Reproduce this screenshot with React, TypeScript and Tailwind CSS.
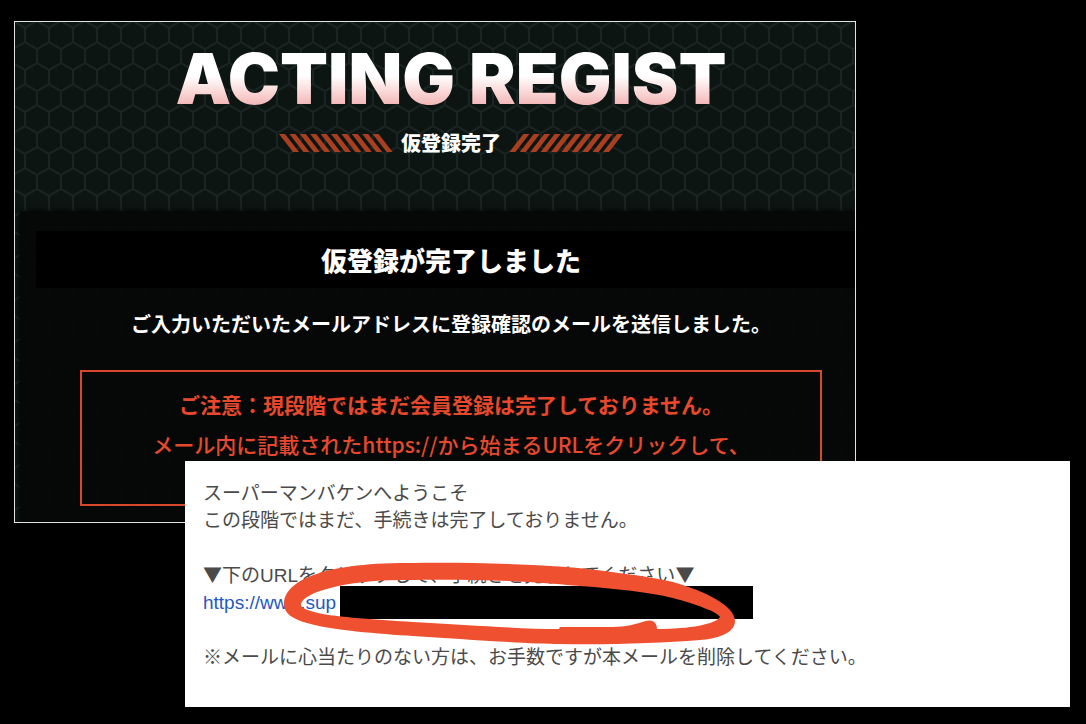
// 仮登録完了画面と確認メール

interface StripesProps {
  flip?: boolean
}

const STRIPES = [0, 1, 2, 3, 4, 5, 6, 7, 8, 9]

// 見出し横の斜線
function Stripes({ flip }: StripesProps) {
  return (
    <svg width="114" height="18" viewBox="0 0 114 18" aria-hidden="true">
      <g transform={flip ? 'translate(114 0) scale(-1 1)' : undefined} fill="#a83f20">
        {STRIPES.map((i) => (
          <path key={i} d="M0 0h6l14 18h-6z" transform={`translate(${i * 10.4} 0)`} />
        ))}
      </g>
    </svg>
  )
}

// 六角形の背景
function HexBackground() {
  return (
    <svg className="absolute inset-0 h-full w-full" aria-hidden="true">
      <defs>
        <pattern id="hex" x="10" y="6" width="24" height="42" patternUnits="userSpaceOnUse">
          <path
            d="M0 0v14l12 7 12-7V0M12 21v14L0 42M12 35l12 7M0 0l12-7L24 0"
            fill="none"
            stroke="#1a2523"
            strokeWidth="2"
          />
        </pattern>
      </defs>
      <rect width="100%" height="100%" fill="#0d1513" />
      <rect width="100%" height="100%" fill="url(#hex)" />
    </svg>
  )
}

function RegistPanel() {
  return (
    <main className="relative ml-[14px] mr-[230px] overflow-hidden border border-[#dfe3e2] text-center font-['Noto_Sans_CJK_JP',sans-serif] text-white">
      <HexBackground />
      <header className="relative pt-[25px] pb-[52px] pl-8">
        <h1 className="bg-linear-to-b from-white from-45% to-[#f0b0b0] to-95% bg-clip-text font-['Inter',sans-serif] text-[70px] leading-16 font-black text-transparent">
          ACTING REGIST
        </h1>
        <div className="mt-4 flex items-center justify-center gap-2">
          <Stripes />
          <p className="text-[20px] leading-8 font-black">仮登録完了</p>
          <Stripes flip />
        </div>
      </header>

      <section className="relative ml-[5px] bg-[#060707]/95 pt-5 pb-4 shadow-[0_0_6px_#000]">
        <h2 className="ml-4 bg-black pl-[11px] text-[26px] leading-[57px] font-black">
          仮登録が完了しました
        </h2>
        <p className="mt-4 pl-[27px] text-[20px] leading-10 font-bold">
          ご入力いただいたメールアドレスに登録確認のメールを送信しました。
        </p>
        <div className="mt-[26px] mr-[33px] ml-[60px] border-2 border-[#d9472f] pt-3 pb-10 text-[21px] leading-10 text-[#e8492c]">
          <p className="font-bold">ご注意：現段階ではまだ会員登録は完了しておりません。</p>
          <p className="font-medium">メール内に記載されたhttps://から始まるURLをクリックして、</p>
        </div>
      </section>
    </main>
  )
}

// 黒塗りと手書きの囲み
function Marker() {
  return (
    <svg className="pointer-events-none absolute top-0 left-0" width="580" height="200" aria-hidden="true">
      <rect x="155" y="125" width="413" height="33" fill="#000" />
      <g transform="translate(-185 -461)">
        <path
          fill="#ef5130"
          fillRule="evenodd"
          d="M284 604C284 582 320 563 407 563C450 562 510 563 567 567C610 571 650 577 673 582C705 591 735 606 735 621C735 634 715 639 700 640C660 643 610 645 560 644C530 644 460 639 413 636C380 634 330 630 307 623C292 619 284 613 284 604Z
             M301 604C303 592 350 579 407 580C450 579 520 580 567 585C600 587 650 592 673 598C695 604 718 612 720 617C716 624 690 629 657 629C657 622 652 619 646 621C636 624 625 627 613 627L560 627L559 629C520 629 470 625 413 622C380 620 335 617 318 613C306 610 300 608 301 604Z"
        />
      </g>
    </svg>
  )
}

function Triangle() {
  return <span className="font-['Noto_Sans_CJK_JP',sans-serif] leading-none">▼</span>
}

function MailCard() {
  return (
    <article className="relative -mt-[62px] mr-4 ml-[185px] flex flex-col gap-7 bg-white px-[18px] pt-[19px] pb-9 font-['Liberation_Sans','Noto_Sans_CJK_JP',sans-serif] text-[19px] leading-[27px] text-[#4a4a4a]">
      <p>
        スーパーマンバケンへようこそ
        <br />
        この段階ではまだ、手続きは完了しておりません。
      </p>
      <p>
        <Triangle />
        下のURLをクリックして、手続きを完了してください
        <Triangle />
        <br />
        <a href="#" className="text-[#2458c0]">
          https://www.sup
        </a>
      </p>
      <p>※メールに心当たりのない方は、お手数ですが本メールを削除してください。</p>
      <Marker />
    </article>
  )
}

export default function App() {
  return (
    <div className="min-h-screen bg-black pt-[21px]">
      <RegistPanel />
      <MailCard />
    </div>
  )
}
